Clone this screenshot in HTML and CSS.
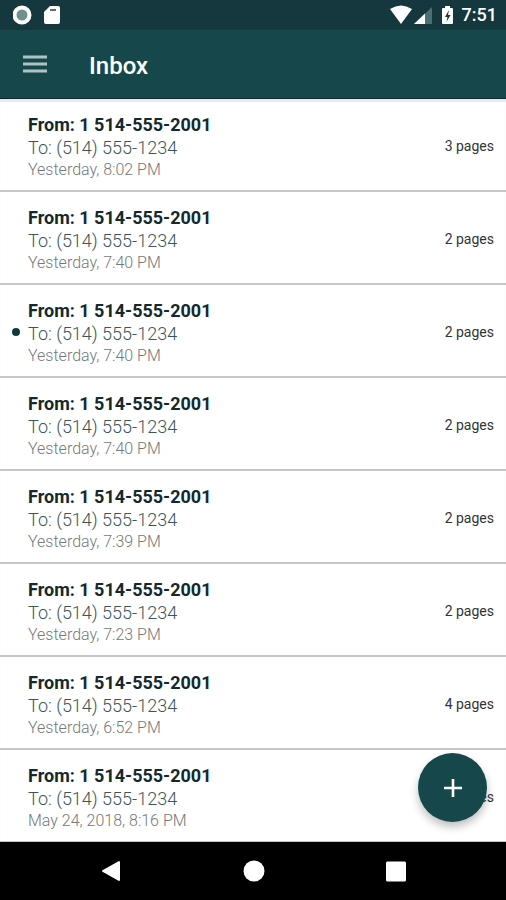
FILE: index.html
```html
<!DOCTYPE html>
<html lang="en">
<head>
<meta charset="utf-8">
<meta name="viewport" content="width=device-width, initial-scale=1">
<title>Inbox</title>
<link rel="stylesheet" href="styles.css">
</head>
<body>
<div class="status">
  <svg class="status-left" width="48" height="22" viewBox="0 0 48 22" aria-hidden="true">
    <circle cx="9" cy="11" r="7.5" fill="#6f918d" stroke="#fff" stroke-width="4"/>
    <path d="M37 2h8q2 0 2 2v14q0 2-2 2H33q-2 0-2-2V8z" fill="#fff"/>
    <path d="M37 5h6v2h-6z" fill="#60706e"/>
  </svg>
  <div class="status-right">
    <svg width="66" height="22" viewBox="0 0 66 22" aria-hidden="true">
      <path d="M0 5Q11-2 22 5L11 20z" fill="#fff"/>
      <path d="M42 3v17H24z" fill="#4c706f"/>
      <path d="M35 9.500V20H24z" fill="#fff"/>
      <path d="M55 2h5v2h2q1 0 1 1v14q0 1-1 1h-9q-1 0-1-1V5q0-1 1-1h2z" fill="#fff"/>
      <path d="M59 6l-4 7h2.500l-1 5 4-7H58z" fill="#14383d"/>
    </svg>
    <span>7:51</span>
  </div>
</div>
<header class="bar">
  <button class="menu" type="button" aria-label="Menu">
    <svg width="24" height="18" viewBox="0 0 24 18"><path d="M0 2h24M0 9h24M0 16h24" stroke="#b0c3c2" stroke-width="3"/></svg>
  </button>
  <h1>Inbox</h1>
</header>
<main class="inbox">
  <ul class="list">
    <li class="row"><div class="text"><strong>From: 1 514-555-2001</strong><span class="to">To: (514) 555-1234</span><time>Yesterday, 8:02 PM</time></div><span class="pages">3 pages</span></li>
    <li class="row"><div class="text"><strong>From: 1 514-555-2001</strong><span class="to">To: (514) 555-1234</span><time>Yesterday, 7:40 PM</time></div><span class="pages">2 pages</span></li>
    <li class="row unread"><div class="text"><strong>From: 1 514-555-2001</strong><span class="to">To: (514) 555-1234</span><time>Yesterday, 7:40 PM</time></div><span class="pages">2 pages</span></li>
    <li class="row"><div class="text"><strong>From: 1 514-555-2001</strong><span class="to">To: (514) 555-1234</span><time>Yesterday, 7:40 PM</time></div><span class="pages">2 pages</span></li>
    <li class="row"><div class="text"><strong>From: 1 514-555-2001</strong><span class="to">To: (514) 555-1234</span><time>Yesterday, 7:39 PM</time></div><span class="pages">2 pages</span></li>
    <li class="row"><div class="text"><strong>From: 1 514-555-2001</strong><span class="to">To: (514) 555-1234</span><time>Yesterday, 7:23 PM</time></div><span class="pages">2 pages</span></li>
    <li class="row"><div class="text"><strong>From: 1 514-555-2001</strong><span class="to">To: (514) 555-1234</span><time>Yesterday, 6:52 PM</time></div><span class="pages">4 pages</span></li>
    <li class="row"><div class="text"><strong>From: 1 514-555-2001</strong><span class="to">To: (514) 555-1234</span><time>May 24, 2018, 8:16 PM</time></div><span class="pages">2 pages</span></li>
  </ul>
  <button class="fab" type="button" aria-label="New fax">
    <svg width="18" height="18" viewBox="0 0 18 18"><path d="M9 0v18M0 9h18" stroke="#fff" stroke-width="2.600"/></svg>
  </button>
</main>
<nav class="nav">
  <button type="button" aria-label="Back"><svg width="22" height="22" viewBox="0 0 22 22"><path d="M2 11L18 2v18z" fill="#fff" stroke="#fff" stroke-width="2" stroke-linejoin="round"/></svg></button>
  <button type="button" aria-label="Home"><svg width="22" height="22" viewBox="0 0 22 22"><circle cx="11" cy="11" r="10.500" fill="#fff"/></svg></button>
  <button type="button" aria-label="Recent apps"><svg width="22" height="22" viewBox="0 0 22 22"><rect x="1" y="1.500" width="20" height="20" rx="1.500" fill="#fff"/></svg></button>
</nav>
</body>
</html>
```
FILE: styles.css
```css
* {
  box-sizing: border-box;
}

body {
  margin: 0;
  height: 100vh;
  display: flex;
  flex-direction: column;
  background: #fff;
  font-family: Roboto, "Liberation Sans", sans-serif;
}

button {
  display: flex;
  align-items: center;
  justify-content: center;
  padding: 0;
  border: 0;
  background: none;
}

.status {
  flex: none;
  height: 30px;
  padding: 0 9px 0 13px;
  display: flex;
  align-items: center;
  justify-content: space-between;
  background: #14383d;
  color: #fff;
}

.status-right {
  display: flex;
  align-items: center;
  gap: 6px;
  font-size: 18px;
  line-height: 30px;
  font-weight: 500;
}

.bar {
  flex: none;
  height: 69px;
  padding: 0 23px;
  display: flex;
  align-items: center;
  gap: 42px;
  background: #16484b;
  border-bottom: 1px solid #0c2930;
}

.bar h1 {
  margin: 0;
  padding-top: 4px;
  color: #fff;
  font-size: 24px;
  line-height: 30px;
  font-weight: 500;
}

.inbox {
  position: relative;
  flex: 1;
  min-height: 0;
}

.list {
  height: 100%;
  margin: 0;
  padding: 0;
  list-style: none;
  overflow-y: auto;
  scrollbar-width: none;
  box-shadow: inset 0 3px 1px #e9e8ec;
}

.row {
  position: relative;
  height: 93px;
  padding: 0 12px 0 28px;
  display: flex;
  align-items: center;
  justify-content: space-between;
  border-bottom: 2px solid #c3c7c8;
}

.unread::before {
  content: "";
  position: absolute;
  left: 12px;
  top: 43px;
  width: 8px;
  height: 8px;
  border-radius: 50%;
  background: #12383e;
}

.text {
  padding-top: 4px;
  display: flex;
  flex-direction: column;
  font-size: 18px;
  line-height: 23px;
}

.text strong {
  color: #14292d;
  font-weight: 700;
}

.to {
  color: #3c5557;
  font-weight: 300;
}

.text time {
  color: #777;
  font-size: 16px;
  line-height: 21px;
  font-weight: 300;
}

.pages {
  padding-top: 2px;
  color: #333;
  font-size: 14px;
  line-height: 20px;
}

.fab {
  position: absolute;
  right: 19px;
  bottom: 20px;
  width: 69px;
  height: 69px;
  border-radius: 50%;
  background: #16484b;
  box-shadow: 0 5px 9px rgba(0, 0, 0, 0.25);
}

.nav {
  flex: none;
  height: 58px;
  padding: 0 99px 0 101px;
  display: flex;
  align-items: center;
  justify-content: space-between;
  background: #000;
}
```
